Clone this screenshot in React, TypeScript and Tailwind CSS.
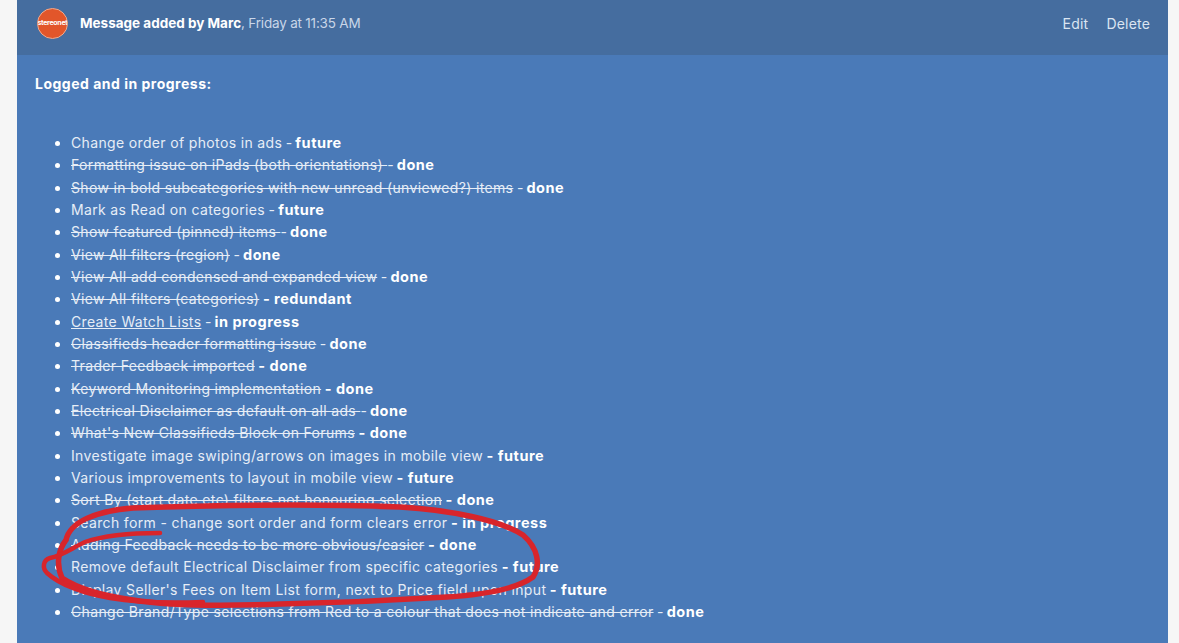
const font = { fontFamily: '"Inter", "Open Sans", sans-serif' };

type Row = { text?: string; struck?: string; tail: string; bold: string; link?: boolean };

// struck = part drawn with a line through it, tail = plain part before the bold status
const rows: Row[] = [
  { text: "Change order of photos in ads", tail: " - ", bold: "future" },
  { struck: "Formatting issue on iPads (both orientations) ", tail: "- ", bold: "done" },
  { struck: "Show in bold subcategories with new unread (unviewed?) items", tail: " - ", bold: "done" },
  { text: "Mark as Read on categories", tail: " - ", bold: "future" },
  { struck: "Show featured (pinned) items ", tail: "- ", bold: "done" },
  { struck: "View All filters (region)", tail: " - ", bold: "done" },
  { struck: "View All add condensed and expanded view", tail: " - ", bold: "done" },
  { struck: "View All filters (categories)", tail: " ", bold: "- redundant" },
  { text: "Create Watch Lists", link: true, tail: " - ", bold: "in progress" },
  { struck: "Classifieds header formatting issue", tail: " - ", bold: "done" },
  { struck: "Trader Feedback imported", tail: " ", bold: "- done" },
  { struck: "Keyword Monitoring implementation", tail: " ", bold: "- done" },
  { struck: "Electrical Disclaimer as default on all ads ", tail: "- ", bold: "done" },
  { struck: "What's New Classifieds Block on Forums", tail: " ", bold: "- done" },
  { text: "Investigate image swiping/arrows on images in mobile view", tail: " ", bold: "- future" },
  { text: "Various improvements to layout in mobile view", tail: " ", bold: "- future" },
  { struck: "Sort By (start date etc) filters not honouring selection", tail: " ", bold: "- done" },
  { text: "Search form - change sort order and form clears error", tail: " ", bold: "- in progress" },
  { struck: "Adding Feedback needs to be more obvious/easier", tail: " ", bold: "- done" },
  { text: "Remove default Electrical Disclaimer from specific categories", tail: " ", bold: "- future" },
  { text: "Display Seller's Fees on Item List form, next to Price field upon input", tail: " ", bold: "- future" },
  { struck: "Change Brand/Type selections from Red to a colour that does not indicate and error", tail: " - ", bold: "done" },
];

export default function App() {
  return (
    <div className="relative h-[643px] overflow-hidden bg-[#f6f6f6] pl-[17px] pr-[11px]" style={font}>
      <div className="h-full bg-[#4a7ab8] text-[14px] text-[#e6edf6]">
        <header className="flex h-[55px] items-center justify-between bg-[#456d9f] pb-[9px] pl-[20px] pr-[18px]">
          <div className="flex items-center gap-3">
            <div className="flex h-[31px] w-[31px] items-center justify-center overflow-hidden rounded-full border border-[#f0a98c] bg-[#e2562a] text-[7px] font-bold tracking-[-0.3px] text-white">
              stereonet
            </div>
            <p className="text-[13.5px] text-[#c9d6e8]">
              <strong className="font-bold text-white">Message added by Marc</strong>
              <span className="tracking-[-0.2px]">, Friday at 11:35 AM</span>
            </p>
          </div>
          <div className="flex gap-[18px] text-[14px] tracking-[0.2px] text-[#dbe5f2]">
            <span>Edit</span>
            <span>Delete</span>
          </div>
        </header>

        <div className="px-[18px] pt-[20px]">
          <p className="text-[14px] font-bold leading-[18px] tracking-[0.5px] text-white">Logged and in progress:</p>
          <ul className="mt-[39px] list-disc pl-[36px] leading-[22.33px] tracking-[0.35px] marker:text-white">
            {rows.map((r, i) => (
              <li key={i} className="whitespace-pre">
                {r.struck && <s>{r.struck}</s>}
                {r.link ? <u>{r.text}</u> : r.text}
                <span className="tracking-[-0.4px]">{r.tail}</span>
                <strong className="text-[14.5px] font-bold tracking-[0.5px] text-white">{r.bold}</strong>
              </li>
            ))}
          </ul>
        </div>
      </div>

      {/* red pen annotation drawn over the list */}
      <svg className="absolute left-0 top-0 h-[643px] w-[1179px]" viewBox="0 0 1179 643" fill="none">
        <path
          d="M66 540 C70 522 95 511 133 508 C220 505 320 504 400 507 C450 510 500 520 523 535 C538 548 541 565 533 577 C515 590 480 595 447 597 C400 600 330 603 280 604 C230 606 170 606 133 600 C105 596 80 590 62 578 C56 565 58 550 66 540"
          stroke="#d8252b"
          strokeWidth="5.5"
          strokeLinecap="round"
        />
        <path
          d="M160 533 C130 533 105 535 85 542 C72 548 62 556 50 558 C43 560 42 568 47 573 C60 585 85 594 110 598 C140 603 175 603 203 602"
          stroke="#d8252b"
          strokeWidth="4.5"
          strokeLinecap="round"
        />
      </svg>
    </div>
  );
}
